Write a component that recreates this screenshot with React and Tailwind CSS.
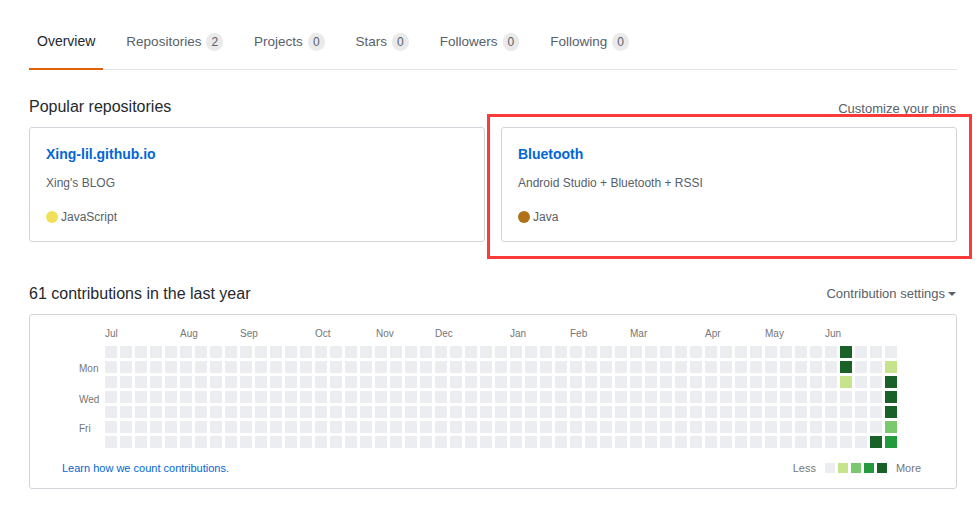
import React from 'react'

const FONT = { fontFamily: '"Liberation Sans", Arial, sans-serif' }

const tabs = [
    { label: 'Overview', selected: true },
    { label: 'Repositories', count: 2 },
    { label: 'Projects', count: 0 },
    { label: 'Stars', count: 0 },
    { label: 'Followers', count: 0 },
    { label: 'Following', count: 0 },
]

const repos = [
    { name: 'Xing-lil.github.io', desc: "Xing's BLOG", lang: 'JavaScript', color: 'bg-[#f1e05a]' },
    { name: 'Bluetooth', desc: 'Android Studio + Bluetooth + RSSI', lang: 'Java', color: 'bg-[#b07219]' },
]

const months = [
    ['Jul', 75], ['Aug', 150], ['Sep', 210], ['Oct', 285], ['Nov', 346], ['Dec', 405],
    ['Jan', 480], ['Feb', 540], ['Mar', 600], ['Apr', 675], ['May', 735], ['Jun', 795],
]

const levels = ['#ebedf0', '#c6e48b', '#7bc96f', '#239a3b', '#196127']

// non-empty days: week-day -> level
const active = {
    '49-0': 4, '49-1': 4, '49-2': 1,
    '51-6': 4,
    '52-1': 1, '52-2': 4, '52-3': 4, '52-4': 4, '52-5': 2, '52-6': 3,
}

const Tab = ({ label, count, selected }) => (
    <div
        className={`flex items-center px-2 py-4 mr-[15px] leading-[21px] border-b-2 -mb-px ${
            selected ? 'text-[14px] border-[#e36209] text-[#24292e]' : 'text-[13.5px] border-transparent text-[#586069]'
        }`}
    >
        {label}
        {count !== undefined && (
            <span className="ml-[5px] px-[5px] rounded-full bg-[#eaeaeb] text-[12px] leading-[18px] text-[#586069]">
                {count}
            </span>
        )}
    </div>
)

const RepoCard = ({ name, desc, lang, color }) => (
    <div className="flex-1 border border-[#d1d5da] rounded-[3px] px-4 pt-4 pb-[15px]">
        <div className="text-[14px] leading-[20px] font-bold text-[#0366d6]">{name}</div>
        <div className="mt-[10px] text-[12px] leading-[18px] text-[#586069]">{desc}</div>
        <div className="mt-4 flex items-center text-[12px] leading-[18px] text-[#586069]">
            <span className={`w-3 h-3 rounded-full ${color} mr-[3px]`} />
            {lang}
        </div>
    </div>
)

const Graph = () => {
    const cells = []
    for (let w = 0; w < 53; w++) {
        for (let d = 0; d < 7; d++) {
            const lvl = active[`${w}-${d}`] || 0
            cells.push(
                <rect key={`${w}-${d}`} x={75 + w * 15} y={31 + d * 15} width="12" height="12" fill={levels[lvl]} />
            )
        }
    }
    return (
        <svg width="926" height="138" className="block">
            {months.map(([m, x]) => (
                <text key={m} x={x} y="22" fontSize="10" fill="#767676">{m}</text>
            ))}
            <text x="49" y="57" fontSize="10" fill="#767676">Mon</text>
            <text x="49" y="88" fontSize="10" fill="#767676">Wed</text>
            <text x="49" y="117" fontSize="10" fill="#767676">Fri</text>
            {cells}
        </svg>
    )
}

export default function App() {
    return (
        <div className="relative w-[980px] h-[506px] bg-white overflow-hidden" style={FONT}>
            <div className="ml-[29px] w-[928px]">
                <nav className="mt-[15px] flex border-b border-[#e1e4e8]">
                    {tabs.map((t) => (
                        <Tab key={t.label} {...t} />
                    ))}
                </nav>

                <div className="mt-[25px] flex items-end justify-between">
                    <h2 className="text-[16px] leading-[24px] text-[#24292e]">Popular repositories</h2>
                    <span className="text-[13px] leading-[20px] text-[#586069] mr-[1px]">Customize your pins</span>
                </div>
                <div className="mt-2 flex gap-4">
                    {repos.map((r) => (
                        <RepoCard key={r.name} {...r} />
                    ))}
                </div>

                <div className="mt-[40px] flex items-center justify-between">
                    <h2 className="text-[16px] leading-[24px] text-[#24292e]">61 contributions in the last year</h2>
                    <span className="flex items-center text-[13px] leading-[20px] text-[#586069] mr-[1px]">
                        Contribution settings
                        <svg width="8" height="4" viewBox="0 0 8 4" className="ml-[3px]">
                            <path d="M0 0h8L4 4z" fill="#586069" />
                        </svg>
                    </span>
                </div>
                <div className="mt-2 h-[175px] border border-[#d1d5da] rounded-[3px]">
                    <Graph />
                    <div className="flex items-center justify-between pl-[32px] pr-[35px] h-[30px] text-[11px] text-[#767676]">
                        <span className="text-[#0366d6]">Learn how we count contributions.</span>
                        <div className="flex items-center">
                            <span className="mr-[9px]">Less</span>
                            {levels.map((c) => (
                                <span key={c} className="w-[10px] h-[10px] mr-[3px]" style={{ backgroundColor: c }} />
                            ))}
                            <span className="ml-[6px]">More</span>
                        </div>
                    </div>
                </div>
            </div>

            <div className="absolute left-[487px] top-[114px] w-[485px] h-[145px] border-[3px] border-[#fc3a3a]" />
        </div>
    )
}
